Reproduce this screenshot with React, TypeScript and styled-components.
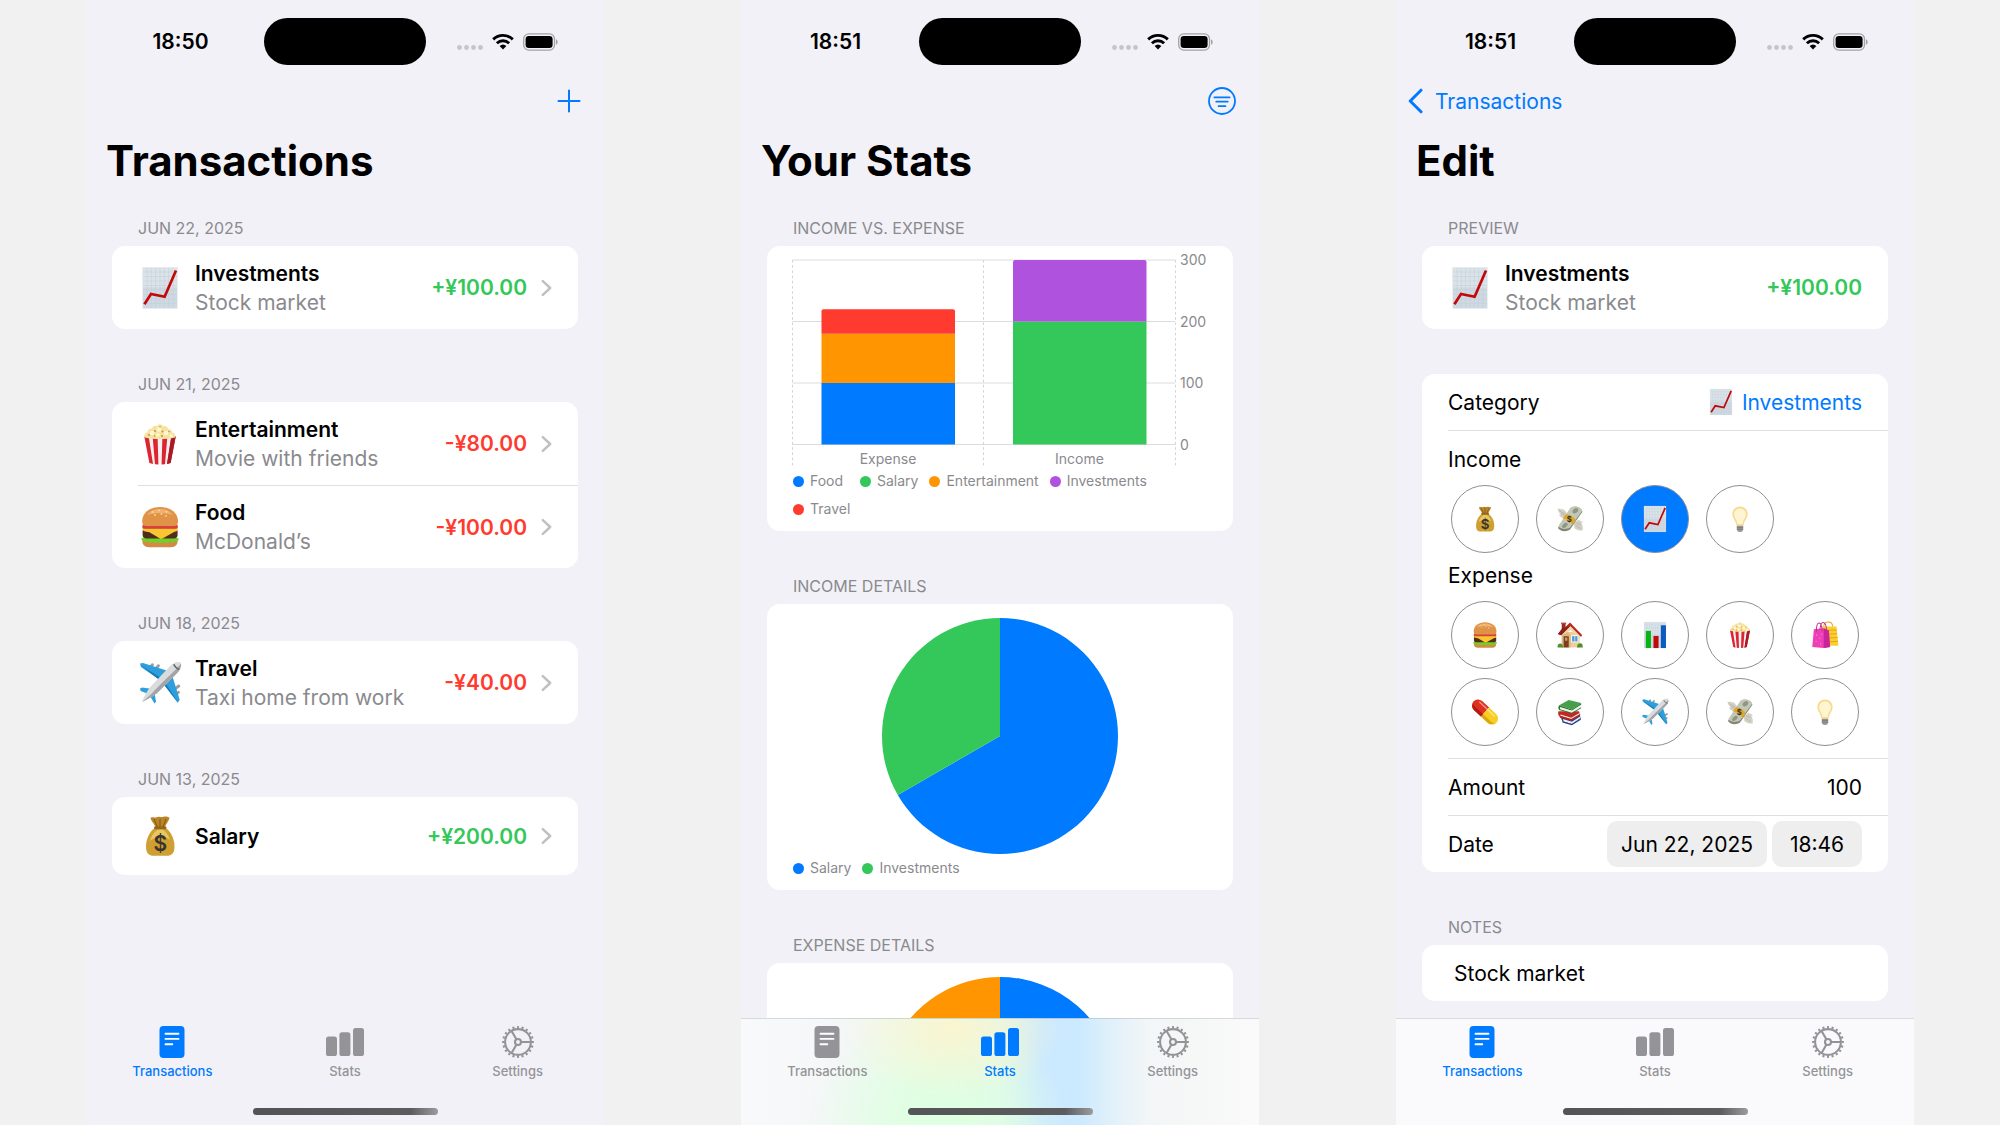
import React from "react";
import styled, { createGlobalStyle } from "styled-components";

const color = {
  page: "#f1f1f1",
  screen: "#f2f1f7",
  card: "#ffffff",
  label: "#000000",
  secondary: "#8a8a8e",
  tabIdle: "#949498",
  separator: "#dfdfe2",
  chip: "#eeeeef",
  blue: "#007aff",
  green: "#34c759",
  red: "#ff3b30",
  orange: "#ff9500",
  purple: "#af52de",
};

const GlobalStyle = createGlobalStyle`
  * { box-sizing: border-box; }
  body {
    margin: 0;
    background: ${color.page};
    color: ${color.label};
    font-family: Inter, "Liberation Sans", sans-serif;
    font-size: 21px;
    line-height: 29px;
  }
  button, input { font: inherit; color: inherit; border: 0; padding: 0; margin: 0; background: none; }
  button { cursor: pointer; }
  a { color: inherit; text-decoration: none; }
  h1, h2, h3, p, ul, dl { margin: 0; padding: 0; }
  svg { display: block; flex: none; }
`;

/* ---------- Shell ---------- */

const Board = styled.main`
  display: flex;
  justify-content: center;
  gap: 137px;
  padding: 0 86px;
  height: 100vh;
`;

const Phone = styled.section`
  position: relative;
  flex: 1;
  min-width: 0;
  display: flex;
  flex-direction: column;
  overflow: hidden;
  background: ${color.screen};
`;

const StatusRow = styled.div`
  display: grid;
  grid-template-columns: 1fr 162px 1fr;
  align-items: center;
  height: 83px;
  flex: none;
`;

const Clock = styled.time`
  padding-right: 2px;
  padding-left: 13px;
  text-align: center;
  font-weight: 600;
`;

const Island = styled.div`
  height: 47px;
  border-radius: 24px;
  background: #000;
`;

const StatusIcons = styled.div`
  display: flex;
  align-items: center;
  justify-content: center;
  gap: 9px;
  padding-right: 15px;
`;

const NavRow = styled.div`
  display: flex;
  align-items: center;
  height: 36px;
  padding: 0 23px 0 12px;
  color: ${color.blue};
  flex: none;
`;

const NavAction = styled.button`
  margin-left: auto;
`;

const BackLink = styled.a`
  display: flex;
  align-items: center;
  gap: 12px;
`;

const Title = styled.h1`
  padding: 16px 20px 0;
  font-size: 42px;
  line-height: 52px;
  font-weight: 700;
  flex: none;
`;

const Content = styled.div`
  display: flex;
  flex-direction: column;
  gap: 45px;
  padding: 31px 26px 0;
`;

const SectionTitle = styled.h2`
  display: block;
  padding: 0 26px 8px;
  font-size: 16px;
  line-height: 20px;
  font-weight: 400;
  text-transform: uppercase;
  color: ${color.secondary};
`;

const Card = styled.div`
  border-radius: 13px;
  background: ${color.card};
  overflow: hidden;
`;

/* ---------- Transaction rows ---------- */

const Row = styled.div<{ $tall: boolean }>`
  display: flex;
  align-items: center;
  gap: 13px;
  min-height: ${(p) => (p.$tall ? 83 : 78)}px;
  margin-left: 26px;
  padding-right: 26px;
  & + & { border-top: 1px solid ${color.separator}; }
`;

const RowText = styled.div`
  flex: 1;
  min-width: 0;
`;

const RowName = styled.h3`
  font-size: 21px;
  line-height: 29px;
  font-weight: 600;
`;

const RowNote = styled.p`
  color: ${color.secondary};
`;

const Amount = styled.span<{ $positive: boolean }>`
  font-weight: 600;
  color: ${(p) => (p.$positive ? color.green : color.red)};
`;

/* ---------- Edit form ---------- */

const Field = styled.div<{ $inset?: number }>`
  display: flex;
  align-items: center;
  justify-content: space-between;
  height: 57px;
  margin-left: ${(p) => p.$inset ?? 26}px;
  padding-right: 26px;
  border-bottom: 1px solid ${color.separator};
  &:last-child { height: 56px; border-bottom: 0; }
`;

const ValueButton = styled.button`
  display: flex;
  align-items: center;
  gap: 7px;
  color: ${color.blue};
`;

const TextInput = styled.input<{ $align?: string }>`
  flex: 1;
  min-width: 0;
  text-align: ${(p) => p.$align ?? "left"};
  outline: none;
`;

const Picker = styled.div`
  margin-left: 26px;
  padding: 14px 26px 12px 0;
  border-bottom: 1px solid ${color.separator};
`;

const PickerTitle = styled.h3`
  font-size: 21px;
  line-height: 29px;
  font-weight: 400;
`;

const PickerGrid = styled.div`
  display: grid;
  grid-template-columns: repeat(5, 68px);
  justify-content: space-between;
  row-gap: 9px;
  padding: 11px 3px 0;
  & + ${PickerTitle} { margin-top: 8px; }
`;

const CategoryButton = styled.button<{ $active: boolean }>`
  display: flex;
  align-items: center;
  justify-content: center;
  height: 68px;
  border: 1px solid #8e8e93;
  border-radius: 50%;
  background: ${(p) => (p.$active ? color.blue : "transparent")};
`;

const Chips = styled.div`
  display: flex;
  gap: 5px;
`;

const Chip = styled.button`
  min-width: 90px;
  height: 46px;
  padding: 0 14px;
  border-radius: 10px;
  background: ${color.chip};
`;

/* ---------- Charts ---------- */

const ChartCard = styled(Card)<{ $top: number }>`
  padding: ${(p) => p.$top}px 26px 13px;
`;

const AxisText = styled.text`
  font-size: 14px;
  fill: ${color.secondary};
`;

const PieWrap = styled.div`
  display: flex;
  justify-content: center;
  padding-bottom: 1px;
`;

const Legend = styled.ul`
  display: flex;
  flex-wrap: wrap;
  gap: 10px 11px;
  padding-top: 4px;
  list-style: none;
  font-size: 14px;
  line-height: 18px;
  color: ${color.secondary};
`;

const LegendItem = styled.li<{ $dot: string }>`
  display: flex;
  align-items: center;
  gap: 6px;
  min-width: 56px;
  &::before {
    content: "";
    width: 11px;
    height: 11px;
    border-radius: 50%;
    background: ${(p) => p.$dot};
  }
`;

/* ---------- Tab bar ---------- */

type BarLook = "plain" | "frosted" | "tinted";

const barFill: Record<BarLook, string> = {
  plain: color.screen,
  frosted: "#fafafd",
  tinted: `
    radial-gradient(ellipse 110px 70px at 41% 8%, #faf5d0, rgb(250 245 208 / 0.5) 50%, transparent),
    radial-gradient(ellipse 130px 110px at 38% 95%, #dfffe2 20%, rgb(223 255 226 / 0.6) 55%, transparent),
    linear-gradient(90deg, #f8f9fb, #f5f7f8 16%, #f1f7f3 26%, #e9f9e9 38%, #def6ee 50%, #cbe9ff 58%, #cbe9ff 65%, #e2f1f9 72%, #f3f6f7 79%, #f6f7f7 88%, #fafafb)`,
};

const TabBarRoot = styled.nav<{ $look: BarLook }>`
  position: absolute;
  inset: auto 0 0;
  height: 107px;
  padding: 7px 0 10px;
  display: flex;
  flex-direction: column;
  justify-content: space-between;
  align-items: center;
  border-top: 1px solid ${(p) => (p.$look === "plain" ? "transparent" : "rgb(0 0 30 / 0.13)")};
  background: ${(p) => barFill[p.$look]};
`;

const Tabs = styled.div`
  display: grid;
  grid-template-columns: repeat(3, 1fr);
  width: 100%;
`;

const Tab = styled.a<{ $active: boolean }>`
  display: flex;
  flex-direction: column;
  align-items: center;
  gap: 4px;
  font-size: 13px;
  line-height: 18px;
  font-weight: 500;
  color: ${(p) => (p.$active ? color.blue : color.tabIdle)};
`;

const HomeIndicator = styled.div`
  width: 185px;
  height: 7px;
  border-radius: 4px;
  background: linear-gradient(90deg, #545456, #5c5c5e 85%, #9c9c9f);
`;

/* ---------- System icons ---------- */

const SignalDots = () => (
  <svg width="26" height="17" viewBox="0 0 26 17" fill="#c5c5c9">
    {[2.5, 9.5, 16.5, 23.5].map((x) => (
      <circle key={x} cx={x} cy="14.5" r="2.4" />
    ))}
  </svg>
);

const WifiIcon = () => (
  <svg width="22" height="17" viewBox="0 0 22 17" fill="none" stroke="#000" strokeWidth="2.9">
    <path d="M1.2 6.4a14 14 0 0 1 19.6 0" />
    <path d="M4.9 10.3a8.7 8.7 0 0 1 12.2 0" />
    <path d="M11 16.6 7.6 13.1a5 5 0 0 1 6.8 0Z" fill="#000" stroke="none" />
  </svg>
);

const BatteryIcon = () => (
  <svg width="35" height="18" viewBox="0 0 35 18">
    <rect x=".7" y=".9" width="30.8" height="16.2" rx="5" fill="none" stroke="#a3a3a7" strokeWidth="1.3" />
    <rect x="2.6" y="2.9" width="27" height="12.2" rx="3.3" fill="#000" />
    <path d="M33 6.2c2.2.8 2.2 4.8 0 5.6Z" fill="#a3a3a7" />
  </svg>
);

const PlusIcon = () => (
  <svg width="24" height="24" viewBox="0 0 24 24" stroke="currentColor" strokeWidth="2" strokeLinecap="round">
    <path d="M12 1.500v21M1.500 12h21" />
  </svg>
);

const FilterIcon = () => (
  <svg width="28" height="28" viewBox="0 0 28 28" fill="none" stroke="currentColor" strokeWidth="1.8" strokeLinecap="round">
    <circle cx="14" cy="14" r="13" />
    <path d="M6.4 10.4h15.2M8.300 14.700h11.400M10.600 19.200h6.800" />
  </svg>
);

const BackIcon = () => (
  <svg width="15" height="26" viewBox="0 0 15 26" fill="none" stroke="currentColor" strokeWidth="3" strokeLinecap="round" strokeLinejoin="round">
    <path d="M13 2.200 2.200 13 13 23.800" />
  </svg>
);

const ChevronIcon = () => (
  <svg width="12" height="18" viewBox="0 0 12 18" fill="none" stroke="#c0c0c4" strokeWidth="2.500" strokeLinecap="round" strokeLinejoin="round">
    <path d="m2.800 2.200 7.400 6.800-7.400 6.800" />
  </svg>
);

const DocIcon = () => (
  <svg width="38" height="32" viewBox="0 0 38 32">
    <rect x="6.500" width="25" height="32" rx="4" fill="currentColor" />
    <path d="M12.500 7.800h13M12.500 12.900h13M12.500 18.200h6.800" stroke="#fff" strokeWidth="1.900" strokeLinecap="round" />
  </svg>
);

const BarsIcon = () => (
  <svg width="38" height="32" viewBox="0 0 38 32" fill="currentColor">
    <rect x="0" y="10.600" width="11" height="19.400" rx="2.600" />
    <rect x="13.400" y="6.200" width="11" height="23.800" rx="2.600" />
    <rect x="27" y="2" width="11" height="28" rx="2.600" />
  </svg>
);

const GearIcon = () => (
  <svg width="32" height="32" viewBox="0 0 32 32" fill="none" stroke="currentColor" strokeWidth="2.100">
    <circle cx="16" cy="16" r="12.900" />
    <circle cx="16" cy="16" r="14.800" pathLength="20" strokeDasharray=".44 .56" strokeDashoffset=".22" strokeWidth="2.200" />
    <circle cx="16" cy="16" r="3" />
    <path d="M19 16h10M14.500 13.400 9.600 4.900M14.500 18.600l-4.900 8.500" />
  </svg>
);

/* ---------- Category drawings, all on a 44 unit grid ---------- */

const ChartPaper = () => (
  <>
    <rect x="4.6" y="1.5" width="34.8" height="41" fill="#cfd9e1" />
    <rect x="4.6" y="1.5" width="34.8" height="20" fill="#dfe7ec" opacity=".7" />
    <path
      d="M9 2v40M13.3 2v40M17.6 2v40M22 2v40M26.3 2v40M30.6 2v40M35 2v40M5 6h34M5 10.500h34M5 15h34M5 19.500h34M5 24h34M5 28.500h34M5 33h34M5 37.500h34"
      stroke="#bfcfdb"
      strokeWidth=".5"
    />
  </>
);

const drawings: Record<string, React.ReactNode> = {
  investments: (
    <>
      <ChartPaper />
      <path d="M6.4 38.200 13 28l13.600 2.800L38 4.500" fill="none" stroke="#c4080a" strokeWidth="2.700" />
    </>
  ),
  bills: (
    <>
      <ChartPaper />
      <rect x="7.600" y="15.600" width="8" height="26.900" fill="#06b513" />
      <rect x="19.600" y="23.500" width="8" height="19" fill="#c00a0a" />
      <rect x="31.200" y="6.700" width="8" height="35.800" fill="#0a5cc0" />
    </>
  ),
  entertainment: (
    <>
      <path d="M6.300 14.500h31.400L32.600 41q-10.600 2.400-21.200 0Z" fill="#f6f1f0" />
      <path d="M6.300 14.500h4.400L15 41.900l-3.600-.9ZM14.600 14.500h5L20.400 42.500l-3.400-.3ZM24.400 14.500h5L27 42.200l-3.400.3ZM33.300 14.500h4.400L32.600 41l-3.600.9Z" fill="#dc2530" />
      <path d="M33.300 14.500h4.400L32.600 41l-3.600.9Z" fill="#a81a24" />
      <path d="M6.800 15.500c-1.200-3 .8-5 2.600-5 0-3 2.400-4.300 4.200-3.600C14.400 4 17 3.200 19 4.300c1.200-2.700 5-2.700 6 0 2.400-1 4.700.3 5 2.700 2.600-.3 4.300 1.500 4.100 3.600 2.300.3 3.800 2.600 3 4.900-9 2-21.300 2-30.300 0Z" fill="#f6e3a0" />
      <g fill="#fff6d3">
        <circle cx="14" cy="11" r="2.200" /><circle cx="21" cy="7.500" r="2.200" /><circle cx="28" cy="11" r="2.300" /><circle cx="20" cy="13" r="1.800" /><circle cx="33" cy="13.600" r="1.600" />
      </g>
      <g fill="#c98a35">
        <circle cx="11" cy="13" r=".9" /><circle cx="17" cy="9" r=".9" /><circle cx="24.500" cy="9.500" r=".9" /><circle cx="24" cy="14" r=".9" /><circle cx="31" cy="9.500" r=".8" /><circle cx="16.500" cy="14" r=".8" /><circle cx="22" cy="4.700" r=".7" />
      </g>
    </>
  ),
  food: (
    <>
      <path d="M4.500 35.500h35c.6 3.800-2 6.700-6.500 6.700H11c-4.500 0-7.100-2.900-6.500-6.700Z" fill="#d48a45" />
      <path d="M3.500 33.500c2-3 35-3 37 0 .8 1.600-1 3.500-3 2.500-2 2.200-4 2-5.500.6-1.800 2-4 2-5.700.3-1.800 1.800-4.300 1.800-6 .1-1.900 1.700-4 1.500-5.600-.2-1.800 1.500-4 1.300-5.400-.5-3 1.500-6.400-.6-5.800-2.800Z" fill="#72cf2a" />
      <path d="M4.600 26.500c0-2 1.500-3 3-3h29c1.500 0 3 1 3 3v3.600c0 2-1.600 3.400-3.600 3.400H8.200c-2 0-3.600-1.400-3.600-3.400Z" fill="#4f2d1c" />
      <path d="M4.500 23.500h35.200c.6 2.200-1 3-3.200 3.300L24.500 33.500c-1.200.6-2 .5-3-.2L11 27c-3-.2-7-.8-6.500-3.500Z" fill="#fbc52f" />
      <path d="M4.800 20h34.600c1 1.500.4 3.800-1 3.800H5.800c-1.500 0-2-2.300-1-3.800Z" fill="#d8423a" />
      <path d="M4.200 16.500C4.200 7.500 12 2 22 2s18 5.500 18 14.500c0 3-1.400 4.600-4 4.600H8.200c-2.600 0-4-1.600-4-4.600Z" fill="#e09247" />
      <path d="M9 10c3.500-4.500 8-6 13-6s9.500 1.500 13 6c-6-2.400-20-2.400-26 0Z" fill="#efb16b" />
      <g fill="#fbe6bf">
        <ellipse cx="14.500" cy="7" rx="1" ry=".7" /><ellipse cx="21" cy="5.400" rx="1" ry=".7" /><ellipse cx="28.500" cy="6.800" rx="1" ry=".7" /><ellipse cx="23.500" cy="9" rx="1" ry=".7" /><ellipse cx="28" cy="11" rx=".7" ry="1" /><ellipse cx="17" cy="10" rx="1" ry=".7" />
      </g>
    </>
  ),
  travel: (
    <>
      <g fill="#9a9da1">
        <rect x="12" y="2" width="3" height="6.500" rx="1.400" transform="rotate(35 13.500 5)" />
        <rect x="18" y="3" width="3" height="6.500" rx="1.400" transform="rotate(35 19.500 6)" />
        <rect x="38" y="23" width="3" height="6.500" rx="1.400" transform="rotate(55 39.500 26)" />
        <rect x="38" y="29.500" width="3" height="6.500" rx="1.400" transform="rotate(55 39.500 32)" />
      </g>
      <path d="M2 2.600 5 2 28.500 9.500 21 18.500 3 6Z" fill="#2d9fdc" />
      <path d="m34.500 15.500 7.200 23.300-2 3L25.500 23Z" fill="#2d9fdc" />
      <path d="m2 27.500 2.200-1 10.300 1.600-3.200 5.200L2.600 30Z" fill="#2d9fdc" />
      <path d="m16 29.500 2 11-1.600 2-5-8.700Z" fill="#2d9fdc" />
      <path d="M2 3.800 21 18.500l1.500-1.800Z" fill="#1577b4" />
      <path d="M40.400 42 25.500 23l1.700-1.300Z" fill="#1577b4" />
      <path d="M42.500 1.600c1.800 2.800.2 6.800-3 10.200L19 32.300C13.500 36.500 8.500 38.500 4 41c1.600-4.500 4-9.500 8.300-15L32.200 5C36 1.500 40 0 42.500 1.600Z" fill="#d9dbdd" />
      <path d="M42.900 2.600c.8 2.800-.8 6.200-3.400 9.200L19 32.300C13.500 36.500 8.500 38.500 4 41c8-6.500 12.500-11.500 18-17C30 16 38 9 42.900 2.600Z" fill="#a2a4a8" />
      <path d="M35.700 3.200c1.200 2.600 3 4.300 5.600 5.200" fill="none" stroke="#5f6468" strokeWidth="1.400" />
    </>
  ),
  salary: (
    <>
      <path d="M12.500 3.800c3-1.500 5 .5 7-.8 2.500-1 4 .7 6-.2 2-.6 4.500.3 6 .8-.4 3.400-3.600 6.200-4.700 10.700h-9c-1-4.500-4.900-7-5.300-10.500Z" fill="#b98527" />
      <path d="m16 5 3.500 8M22 5v8M28 5l-3 8" stroke="#7d5415" strokeWidth="1" />
      <path d="M17 14h10.500c5 3 9 10.500 9 18.500 0 6.500-2.500 9.300-8 9.300H16c-5.500 0-8-2.800-8-9.300C8 24.500 12 17 17 14Z" fill="#cf9f32" />
      <path d="M12 27c1.500-6 4.500-9.800 8.500-11.500h4c3.500 2 6 5.600 7.500 10.500-5-4.500-14-4.500-20 1Z" fill="#e8c763" />
      <rect x="16" y="12.300" width="12.500" height="3" rx="1.500" fill="#96671b" />
      <text x="22.300" y="37" textAnchor="middle" fontSize="21" fontWeight="600" fill="#38342e">$</text>
    </>
  ),
  gift: (
    <>
      <path d="M2 6c5 0 9 .6 12 2.500L18 14l-6.500 7C7.500 19 5 16.500 4.800 14.800c1 .2 2 .2 2.600 0C5 12.500 3 9.500 2 6Z" fill="#d3d1c6" />
      <path d="M42 40c-4.500.6-9-.4-13-3.500L28 29l7-6c4 1.200 7 3.300 7.300 5-1-.2-2 0-2.600.2C42 31 42.500 35.500 42 40Z" fill="#d3d1c6" />
      <path d="m5 9 9 5M8 14l6 2M39 37l-8-5M39 31l-7-3" stroke="#aba99d" strokeWidth="1" />
      <path d="M23 5c4-2.500 9-3 12-1.500 3.500 1.500 6 4 6.500 7L22 38.500c-6 4-14 3.500-19-2.500Z" fill="#7f8673" />
      <path d="M23 4c4-2 9-2.500 12-1 3 1.200 5.500 3.500 6.200 6.200L22 35.500c-6 3.600-14 3-18.500-2Z" fill="#c3c8b6" />
      <ellipse cx="30.500" cy="9" rx="5" ry="3.400" transform="rotate(-40 30.500 9)" fill="#8f9783" />
      <ellipse cx="14" cy="32" rx="5" ry="3" transform="rotate(-40 14 32)" fill="#8f9783" />
      <path d="M15.500 14.500c7 1 13 4.700 15.500 9.300l-5 7.500C23.500 26.500 18 22.800 10.500 21Z" fill="#dfa62c" />
      <text x="21" y="26" textAnchor="middle" fontSize="12" fontWeight="700" fill="#3a3427">$</text>
    </>
  ),
  other: (
    <>
      <path d="M22 2.500c7 0 12 5.200 12 11.800 0 7.200-5.300 9.700-6.600 18.200H16.600C15.300 24 10 21.500 10 14.300 10 7.700 15 2.500 22 2.500Z" fill="#f7dc90" />
      <path d="M22 5.500c5.400 0 9.200 4 9.200 9 0 6-4.400 8-5.400 15.500h-7.600c-1-7.500-5.400-9.500-5.400-15.500 0-5 3.800-9 9.200-9Z" fill="#fff5d2" />
      <path d="M17 32.500h10v5.500c0 2.500-2 4.500-5 4.500s-5-2-5-4.500Z" fill="#9b9b9b" />
      <path d="M17 35h10M17 38h10" stroke="#6c6c6c" strokeWidth="1.100" />
    </>
  ),
  home: (
    <>
      <path d="M9 17h28v24.500H9Z" fill="#edcf9e" />
      <path d="M9 18 18 17l5 5v19.500H9Z" fill="#dcb782" />
      <path d="m23 4 14.500 17.500V28L23 14 9 23Z" fill="#f1d7aa" />
      <path d="M9 4h6v9H9Z" fill="#8f2d20" />
      <path d="M8 2.500h8V5H8Z" fill="#b4483a" />
      <path d="M22 2.500 41 22l-1.500 3L22.500 8 8 22.500l-5-2Z" fill="#b52b24" />
      <path d="M22.500 8 8 22.500l-5-2L10 11Z" fill="#8d1f1a" />
      <path d="M12 24h8v17.500h-8Z" fill="#7b3f20" />
      <rect x="14" y="26" width="4" height="5" fill="#c49a6c" />
      <rect x="24" y="22.500" width="11" height="11" fill="#fff" />
      <rect x="25.300" y="23.800" width="8.400" height="8.400" fill="#4d9ad6" />
      <path d="M29.500 23v10" stroke="#fff" strokeWidth="1" />
      <path d="M2.500 41.500c-.5-4 1.500-6 4-6s4.500 2 4.500 6ZM33 41.500c0-4 2-6.500 5-6.500s4.500 2.500 4 6.500Z" fill="#4f8f2c" />
    </>
  ),
  shopping: (
    <>
      <path d="M20 9C20-1 34-1 34 9" fill="none" stroke="#e3a61a" strokeWidth="1.600" />
      <path d="M16 8.500h24L43 39H18Z" fill="#fbcf2e" />
      <path d="m17 15 23.500-1M17 21l24-1M17 27l25-1M17 33l25.500-1" stroke="#e89f1f" strokeWidth="1.500" />
      <path d="M4.500 13 20 11.500 28 15l2 26-10 1.500L2 41Z" fill="#ee3fb5" />
      <path d="M20 11.500 28 15l2 26-10 1.500Z" fill="#c9259a" />
      <path d="M8.500 17C8-1 17-2 17.500 16M14 14c1-17 10-15 10.500 2" fill="none" stroke="#c2309a" strokeWidth="1.600" />
      <g fill="#f887d4">
        <circle cx="9" cy="22" r="1" /><circle cx="14" cy="27" r="1" /><circle cx="8" cy="32" r="1" /><circle cx="17" cy="21" r="1" /><circle cx="15" cy="36" r="1" />
      </g>
    </>
  ),
  health: (
    <g transform="rotate(43 22 22)">
      <path d="M7 12.500h15v19H7a9.500 9.500 0 0 1 0-19Z" fill="#e0301f" />
      <path d="M22 12.500h15a9.500 9.500 0 0 1 0 19H22Z" fill="#f7cf22" />
      <path d="M22 26.500h17.500c2 0 4-1 5.500-2.500-1 4.500-4 7.500-8 7.500H22Z" fill="#dba812" />
      <path d="M22 26.500H2l-3-1.500c1.300 4 4 6.500 8 6.500h15Z" fill="#b31c12" />
      <path d="M5 16.500h32" stroke="#fff" strokeWidth="2" strokeLinecap="round" opacity=".5" />
    </g>
  ),
  education: (
    <>
      <path d="m7 29 3 8 15 4.500 14-9.500-2-5Z" fill="#244a9d" />
      <path d="m11 33 14 4.500L38 29v3L25 41l-13-4Z" fill="#eceef2" />
      <path d="m10 36.500 15 4.500 14-9v2L25 43l-15-4.500Z" fill="#1b3a85" />
      <path d="M4 21c-1.500 3-.5 6 1.500 8L24 34l14-8-2-5Z" fill="#c12a22" />
      <path d="m7 26 17 5 13-7.500v2L24 33 7 28Z" fill="#f0eee8" />
      <path d="m6 28 18 5.500 14-8v2.500l-14 8L6 31Z" fill="#b3231c" />
      <path d="M5 11.500 20 3l19.500 5L25 18Z" fill="#44a04a" />
      <path d="M5 11.500c-2 2.500-1.500 5.500 0 7.500L25 24.500v-1.700L6.500 17v-2.500L25 20l14.500-9.500V8L25 18Z" fill="#2a7a33" />
      <path d="M6.500 14.500 25 20v3L6.500 17.500ZM25 20l13.500-8.500v3L25 23Z" fill="#f1f0ea" />
      <path d="m25 23 14.500-8.500V16L25 24.800Z" fill="#2a7a33" />
    </>
  ),
};

const CategoryIcon = ({ name, size }: { name: string; size: number }) => (
  <svg width={size} height={size} viewBox="0 0 44 44" fill="none" aria-hidden="true">
    {drawings[name]}
  </svg>
);

/* ---------- Shared pieces ---------- */

const StatusBar = ({ time }: { time: string }) => (
  <StatusRow>
    <Clock>{time}</Clock>
    <Island />
    <StatusIcons>
      <SignalDots />
      <WifiIcon />
      <BatteryIcon />
    </StatusIcons>
  </StatusRow>
);

const tabs = [
  { name: "Transactions", Icon: DocIcon },
  { name: "Stats", Icon: BarsIcon },
  { name: "Settings", Icon: GearIcon },
];

const TabBar = ({ active, look }: { active: string; look: BarLook }) => (
  <TabBarRoot $look={look}>
    <Tabs>
      {tabs.map(({ name, Icon }) => (
        <Tab key={name} href={`#${name.toLowerCase()}`} $active={name === active}>
          <Icon />
          {name}
        </Tab>
      ))}
    </Tabs>
    <HomeIndicator />
  </TabBarRoot>
);

interface Entry {
  icon: string;
  name: string;
  note?: string;
  amount: string;
}

const EntryRow = ({ entry, linked }: { entry: Entry; linked?: boolean }) => (
  <Row as={linked ? "a" : "div"} {...(linked ? { href: "#edit" } : {})} $tall={Boolean(entry.note)}>
    <CategoryIcon name={entry.icon} size={44} />
    <RowText>
      <RowName>{entry.name}</RowName>
      {entry.note && <RowNote>{entry.note}</RowNote>}
    </RowText>
    <Amount $positive={entry.amount.startsWith("+")}>{entry.amount}</Amount>
    {linked && <ChevronIcon />}
  </Row>
);

/* ---------- Screens ---------- */

const investment: Entry = { icon: "investments", name: "Investments", note: "Stock market", amount: "+¥100.00" };

const days: { date: string; entries: Entry[] }[] = [
  { date: "Jun 22, 2025", entries: [investment] },
  {
    date: "Jun 21, 2025",
    entries: [
      { icon: "entertainment", name: "Entertainment", note: "Movie with friends", amount: "-¥80.00" },
      { icon: "food", name: "Food", note: "McDonald’s", amount: "-¥100.00" },
    ],
  },
  { date: "Jun 18, 2025", entries: [{ icon: "travel", name: "Travel", note: "Taxi home from work", amount: "-¥40.00" }] },
  { date: "Jun 13, 2025", entries: [{ icon: "salary", name: "Salary", amount: "+¥200.00" }] },
];

const TransactionsScreen = () => (
  <Phone>
    <StatusBar time="18:50" />
    <NavRow>
      <NavAction aria-label="Add transaction">
        <PlusIcon />
      </NavAction>
    </NavRow>
    <Title>Transactions</Title>
    <Content>
      {days.map((day) => (
        <div key={day.date}>
          <SectionTitle>{day.date}</SectionTitle>
          <Card>
            {day.entries.map((entry) => (
              <EntryRow key={entry.name} entry={entry} linked />
            ))}
          </Card>
        </div>
      ))}
    </Content>
    <TabBar active="Transactions" look="plain" />
  </Phone>
);

interface Slice {
  name: string;
  value: number;
  fill: string;
}

const columns: { name: string; parts: Slice[] }[] = [
  {
    name: "Expense",
    parts: [
      { name: "Food", value: 100, fill: color.blue },
      { name: "Entertainment", value: 80, fill: color.orange },
      { name: "Travel", value: 40, fill: color.red },
    ],
  },
  {
    name: "Income",
    parts: [
      { name: "Salary", value: 200, fill: color.green },
      { name: "Investments", value: 100, fill: color.purple },
    ],
  },
];

const plot = { top: 10, bottom: 194.5, width: 382, end: 217 };
const toY = (value: number) => plot.bottom - (value / 300) * (plot.bottom - plot.top);

const BarChart = () => (
  <svg width="100%" viewBox="0 0 414 218" overflow="visible">
    {[0, 100, 200, 300].map((tick) => (
      <g key={tick}>
        <path d={`M-.5 ${toY(tick)}H${plot.width}`} stroke="#dcdcde" />
        <AxisText x={plot.width + 5} y={toY(tick) + 5}>{tick}</AxisText>
      </g>
    ))}
    {[-0.5, 190.5, 382.5].map((x) => (
      <path key={x} d={`M${x} ${plot.top}V${plot.end}`} stroke="#d4d4d6" strokeDasharray="2.600 2.600" />
    ))}
    {columns.map((column, i) => {
      const left = 28.5 + i * 191.5;
      let total = 0;
      return (
        <g key={column.name}>
          {column.parts.map((part, n) => {
            const base = toY(total);
            total += part.value;
            const top = toY(total);
            const r = n === column.parts.length - 1 ? 2 : 0;
            return (
              <path
                key={part.name}
                fill={part.fill}
                d={`M${left} ${base}V${top + r}q0 ${-r} ${r} ${-r}h${133.5 - 2 * r}q${r} 0 ${r} ${r}V${base}Z`}
              />
            );
          })}
          <AxisText x={left + 66.5} y="213.500" textAnchor="middle">{column.name}</AxisText>
        </g>
      );
    })}
  </svg>
);

const Pie = ({ slices }: { slices: Slice[] }) => {
  const sum = slices.reduce((acc, s) => acc + s.value, 0);
  const point = (share: number) => {
    const a = share * Math.PI * 2;
    return `${100 + 100 * Math.sin(a)} ${100 - 100 * Math.cos(a)}`;
  };
  let start = 0;
  return (
    <PieWrap>
      <svg width="236" height="236" viewBox="0 0 200 200">
        {slices.map((s) => {
          const from = start;
          start += s.value / sum;
          return (
            <path
              key={s.name}
              fill={s.fill}
              d={`M100 100L${point(from)}A100 100 0 ${start - from > 0.5 ? 1 : 0} 1 ${point(start)}Z`}
            />
          );
        })}
      </svg>
    </PieWrap>
  );
};

const ChartLegend = ({ items }: { items: { name: string; fill: string }[] }) => (
  <Legend>
    {items.map((item) => (
      <LegendItem key={item.name} $dot={item.fill}>{item.name}</LegendItem>
    ))}
  </Legend>
);

const overview = [
  { name: "Food", fill: color.blue },
  { name: "Salary", fill: color.green },
  { name: "Entertainment", fill: color.orange },
  { name: "Investments", fill: color.purple },
  { name: "Travel", fill: color.red },
];

const incomeSlices: Slice[] = [
  { name: "Salary", value: 200, fill: color.blue },
  { name: "Investments", value: 100, fill: color.green },
];

const expenseSlices: Slice[] = [
  { name: "Food", value: 100, fill: color.blue },
  { name: "Entertainment", value: 80, fill: color.green },
  { name: "Travel", value: 40, fill: color.orange },
];

const StatsScreen = () => (
  <Phone>
    <StatusBar time="18:51" />
    <NavRow>
      <NavAction aria-label="Filter">
        <FilterIcon />
      </NavAction>
    </NavRow>
    <Title>Your Stats</Title>
    <Content>
      <div>
        <SectionTitle>Income vs. Expense</SectionTitle>
        <ChartCard $top={4}>
          <BarChart />
          <ChartLegend items={overview} />
        </ChartCard>
      </div>
      <div>
        <SectionTitle>Income Details</SectionTitle>
        <ChartCard $top={14}>
          <Pie slices={incomeSlices} />
          <ChartLegend items={incomeSlices} />
        </ChartCard>
      </div>
      <div>
        <SectionTitle>Expense Details</SectionTitle>
        <ChartCard $top={14}>
          <Pie slices={expenseSlices} />
        </ChartCard>
      </div>
    </Content>
    <TabBar active="Stats" look="tinted" />
  </Phone>
);

const incomeCategories = ["salary", "gift", "investments", "other"];
const expenseCategories = ["food", "home", "bills", "entertainment", "shopping", "health", "education", "travel", "gift", "other"];

const CategoryGrid = ({ names, selected }: { names: string[]; selected?: string }) => (
  <PickerGrid>
    {names.map((name) => (
      <CategoryButton key={name} aria-label={name} aria-pressed={name === selected} $active={name === selected}>
        <CategoryIcon name={name} size={28} />
      </CategoryButton>
    ))}
  </PickerGrid>
);

const EditScreen = () => (
  <Phone>
    <StatusBar time="18:51" />
    <NavRow>
      <BackLink href="#transactions">
        <BackIcon />
        Transactions
      </BackLink>
    </NavRow>
    <Title>Edit</Title>
    <Content>
      <div>
        <SectionTitle>Preview</SectionTitle>
        <Card>
          <EntryRow entry={investment} />
        </Card>
      </div>
      <Card>
        <Field>
          <span id="category-label">Category</span>
          <ValueButton aria-describedby="category-label">
            <CategoryIcon name="investments" size={28} />
            Investments
          </ValueButton>
        </Field>
        <Picker>
          <PickerTitle>Income</PickerTitle>
          <CategoryGrid names={incomeCategories} selected="investments" />
          <PickerTitle>Expense</PickerTitle>
          <CategoryGrid names={expenseCategories} />
        </Picker>
        <Field>
          <label htmlFor="amount">Amount</label>
          <TextInput id="amount" inputMode="decimal" defaultValue="100" $align="right" />
        </Field>
        <Field>
          <span>Date</span>
          <Chips>
            <Chip>Jun 22, 2025</Chip>
            <Chip>18:46</Chip>
          </Chips>
        </Field>
      </Card>
      <div>
        <SectionTitle as="label" htmlFor="notes">Notes</SectionTitle>
        <Card>
          <Field $inset={32}>
            <TextInput id="notes" defaultValue="Stock market" />
          </Field>
        </Card>
      </div>
    </Content>
    <TabBar active="Transactions" look="frosted" />
  </Phone>
);

export default function App() {
  return (
    <>
      <GlobalStyle />
      <Board>
        <TransactionsScreen />
        <StatsScreen />
        <EditScreen />
      </Board>
    </>
  );
}
